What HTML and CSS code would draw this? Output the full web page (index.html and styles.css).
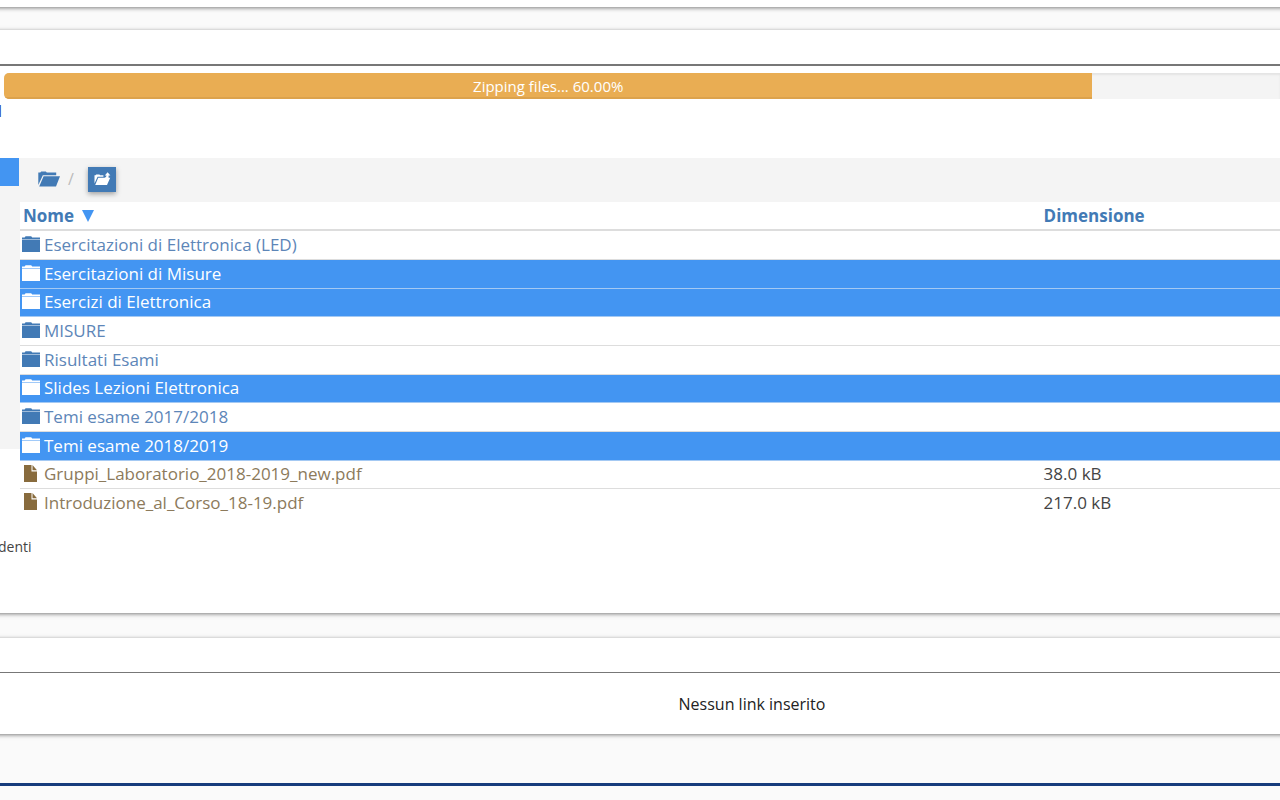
FILE: index.html
```
<!DOCTYPE html>
<html lang="it">
<head>
<meta charset="utf-8">
<title>File e link</title>
<link rel="stylesheet" href="styles.css">
</head>
<body>
<svg class="sprite" aria-hidden="true">
  <symbol id="folder" viewBox="0 0 18 16"><path d="M0 3.2V1.4h2.6L3.6.2h5.6l1 1.2H18v1.8zM0 3.8h18V16H0z"/></symbol>
  <symbol id="file" viewBox="0 0 14 17"><path d="M0 0h7.5v6.5H13V17H0zM8.5 0 13 5.3H8.5z"/></symbol>
  <symbol id="open" viewBox="0 0 22 16"><path d="M.3 14V1.6h2L3.2.6h4.6l1 1h9.4v2.6H4.8zM5.6 5.2H22L18 15.5H1.2z"/></symbol>
  <symbol id="up" viewBox="0 0 17 14"><path d="M.5 11.5V3.2h1L2.2 2.4h3.2l.8.8h3.2v1.6H3.6zM4.2 5.8h5c2 0 3.2-.8 3.3-2.4h-1.7L13.6.3 16.4 3.4h-1.8v2.4h1.6L13 13H1.2z"/></symbol>
</svg>
<section class="panel panel-top"></section>
<section class="panel panel-files">
  <header class="panel-head head-strong"></header>
  <div class="progress" role="progressbar" aria-label="Zipping files" aria-valuenow="60" aria-valuemin="0" aria-valuemax="100">
    <div class="bar" style="width:85.3%">Zipping files... 60.00%</div>
  </div>
  <a class="cut-link" href="#">l</a>
  <div class="browser">
    <aside class="tree"><div class="tree-current"></div></aside>
    <div class="files">
      <nav class="crumbs" aria-label="Percorso">
        <a href="#" aria-label="Cartella principale"><svg class="i-open"><use href="#open"/></svg></a>
        <span class="slash">/</span>
        <button class="up" type="button" aria-label="Cartella superiore"><svg class="i-up"><use href="#up"/></svg></button>
      </nav>
      <table>
        <thead><tr><th class="name" scope="col">Nome <svg class="i-sort" viewBox="0 0 12 12"><path d="M0 0h12L6 12z"/></svg></th><th scope="col">Dimensione</th></tr></thead>
        <tbody>
          <tr><td><a href="#"><svg class="i-folder"><use href="#folder"/></svg>Esercitazioni di Elettronica (LED)</a></td><td></td></tr>
          <tr class="selected"><td><a href="#"><svg class="i-folder"><use href="#folder"/></svg>Esercitazioni di Misure</a></td><td></td></tr>
          <tr class="selected"><td><a href="#"><svg class="i-folder"><use href="#folder"/></svg>Esercizi di Elettronica</a></td><td></td></tr>
          <tr><td><a href="#"><svg class="i-folder"><use href="#folder"/></svg>MISURE</a></td><td></td></tr>
          <tr><td><a href="#"><svg class="i-folder"><use href="#folder"/></svg>Risultati Esami</a></td><td></td></tr>
          <tr class="selected"><td><a href="#"><svg class="i-folder"><use href="#folder"/></svg>Slides Lezioni Elettronica</a></td><td></td></tr>
          <tr><td><a href="#"><svg class="i-folder"><use href="#folder"/></svg>Temi esame 2017/2018</a></td><td></td></tr>
          <tr class="selected"><td><a href="#"><svg class="i-folder"><use href="#folder"/></svg>Temi esame 2018/2019</a></td><td></td></tr>
          <tr class="doc"><td><a href="#"><svg class="i-file"><use href="#file"/></svg>Gruppi_Laboratorio_2018-2019_new.pdf</a></td><td>38.0 kB</td></tr>
          <tr class="doc"><td><a href="#"><svg class="i-file"><use href="#file"/></svg>Introduzione_al_Corso_18-19.pdf</a></td><td>217.0 kB</td></tr>
        </tbody>
      </table>
    </div>
  </div>
  <p class="note">denti</p>
</section>
<section class="panel panel-links">
  <header class="panel-head"></header>
  <p class="empty">Nessun link inserito</p>
</section>
<footer class="footer"></footer>
</body>
</html>
```
FILE: styles.css
```
* { box-sizing: border-box; }
body {
  margin: 0;
  overflow-x: hidden;
  background: #fafafa;
  color: #444;
  font: 16px/24px "Open Sans", sans-serif;
}
p { margin: 0; }
a { color: inherit; text-decoration: none; }
svg { fill: currentColor; flex: none; }
.sprite { display: none; }
.panel { margin: 0 -8px; padding: 0 8px; background: #fff; box-shadow: 0 1px 4px rgba(0, 0, 0, .5); }
.panel-top { height: 7px; }
.panel-files { margin-top: 23px; padding-bottom: 54px; }
.panel-head { height: 35px; border-bottom: 1px solid #777; }
.head-strong { height: 36px; border-bottom: 2px solid #777; }
.progress {
  display: flex;
  height: 26px;
  margin: 7px 0 0 4px;
  border-radius: 5px 0 0 5px;
  overflow: hidden;
  background: #f4f4f4;
  box-shadow: inset 0 2px 2px #e4e4e4;
}
.bar {
  background: #e9ad53;
  box-shadow: inset 0 -2px 0 #dca24c;
  color: #fff;
  font-size: 15px;
  line-height: 26px;
  text-align: center;
}
.cut-link { display: block; margin-left: -2px; color: #3040a0; }
.browser { display: flex; align-items: flex-start; margin-top: 35px; }
.tree { width: 20px; height: 291px; background: #f4f4f4; }
.tree-current { width: 19px; height: 28px; background: #4395f2; }
.files { flex: 1; }
.crumbs { display: flex; align-items: center; height: 44px; padding: 0 0 2px 18px; background: #f4f4f4; color: #427ab5; }
.crumbs a { display: flex; }
.slash { width: 8px; margin: 0 12px 0 8px; color: #bbb; }
.up {
  display: flex;
  align-items: center;
  justify-content: center;
  width: 28px;
  height: 25px;
  padding: 0;
  border: 0;
  background: #427ab5;
  color: #fff;
  box-shadow: 0 2px 5px rgba(0, 0, 0, .35);
}
.i-open { width: 22px; height: 16px; }
.i-up { width: 17px; height: 14px; }
.i-sort { width: 12px; height: 12px; margin-left: 3px; color: #4395f2; }
table { width: 100%; border-collapse: collapse; table-layout: fixed; font-size: 17px; }
th, td { padding: 0 2px; text-align: left; line-height: 24px; }
th { height: 28px; padding-left: 3px; border-bottom: 2px solid #ddd; color: #427ab5; }
th.name { width: 81%; }
td { height: 29px; border-bottom: 1px solid #ddd; }
td:last-child { padding-left: 3px; }
tbody tr:nth-child(3n) td { height: 28px; }
tbody tr:last-child td { border-bottom: 0; }
td a { display: flex; align-items: center; color: #5d86b8; }
td svg { color: #427ab5; }
.i-folder { width: 18px; height: 16px; margin: 0 4px 2px 0; }
.i-file { width: 14px; height: 17px; margin: 0 6px 2px 2px; }
.selected { background: #4395f2; }
.selected td a, .selected td svg { color: #fff; }
.selected td { border-color: #a4c9f3; }
.doc td a { color: #8c7a5b; }
.doc td svg { color: #886b3d; }
.note { margin: 18px 0 0 -2px; font-size: 14px; }
.panel-links { margin-top: 25px; }
.empty { padding: 19px 0 18px 224px; color: #222; text-align: center; }
.footer { margin-top: 49px; border-top: 3px solid #163c7c; }
```
